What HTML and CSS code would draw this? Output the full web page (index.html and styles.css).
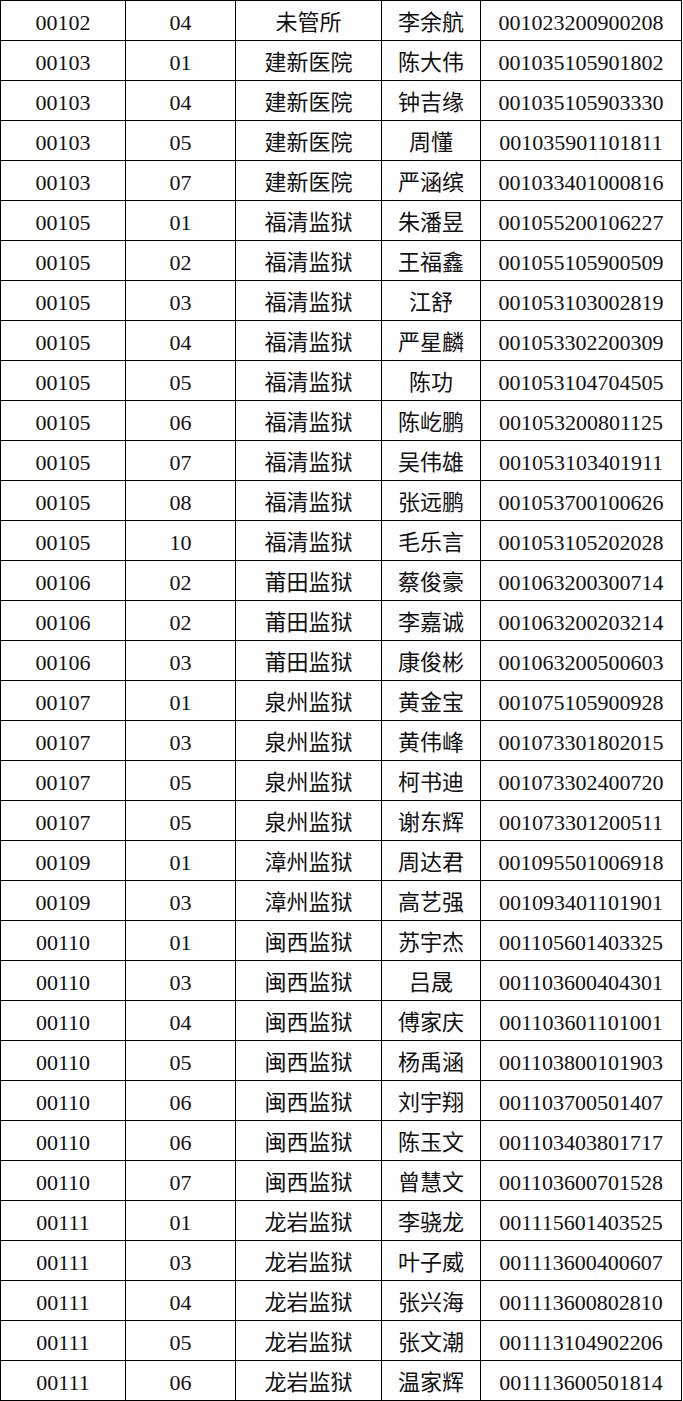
FILE: index.html
```html
<!DOCTYPE html>
<html lang="zh">
<head>
<meta charset="utf-8">
<link rel="stylesheet" href="styles.css">
</head>
<body>
<table class="roster">
<colgroup>
<col class="c1"><col class="c2"><col class="c3"><col class="c4"><col class="c5">
</colgroup>
<tbody>
<tr><td>00102</td><td>04</td><td>未管所</td><td>李余航</td><td>001023200900208</td></tr>
<tr><td>00103</td><td>01</td><td>建新医院</td><td>陈大伟</td><td>001035105901802</td></tr>
<tr><td>00103</td><td>04</td><td>建新医院</td><td>钟吉缘</td><td>001035105903330</td></tr>
<tr><td>00103</td><td>05</td><td>建新医院</td><td>周懂</td><td>001035901101811</td></tr>
<tr><td>00103</td><td>07</td><td>建新医院</td><td>严涵缤</td><td>001033401000816</td></tr>
<tr><td>00105</td><td>01</td><td>福清监狱</td><td>朱潘昱</td><td>001055200106227</td></tr>
<tr><td>00105</td><td>02</td><td>福清监狱</td><td>王福鑫</td><td>001055105900509</td></tr>
<tr><td>00105</td><td>03</td><td>福清监狱</td><td>江舒</td><td>001053103002819</td></tr>
<tr><td>00105</td><td>04</td><td>福清监狱</td><td>严星麟</td><td>001053302200309</td></tr>
<tr><td>00105</td><td>05</td><td>福清监狱</td><td>陈功</td><td>001053104704505</td></tr>
<tr><td>00105</td><td>06</td><td>福清监狱</td><td>陈屹鹏</td><td>001053200801125</td></tr>
<tr><td>00105</td><td>07</td><td>福清监狱</td><td>吴伟雄</td><td>001053103401911</td></tr>
<tr><td>00105</td><td>08</td><td>福清监狱</td><td>张远鹏</td><td>001053700100626</td></tr>
<tr><td>00105</td><td>10</td><td>福清监狱</td><td>毛乐言</td><td>001053105202028</td></tr>
<tr><td>00106</td><td>02</td><td>莆田监狱</td><td>蔡俊豪</td><td>001063200300714</td></tr>
<tr><td>00106</td><td>02</td><td>莆田监狱</td><td>李嘉诚</td><td>001063200203214</td></tr>
<tr><td>00106</td><td>03</td><td>莆田监狱</td><td>康俊彬</td><td>001063200500603</td></tr>
<tr><td>00107</td><td>01</td><td>泉州监狱</td><td>黄金宝</td><td>001075105900928</td></tr>
<tr><td>00107</td><td>03</td><td>泉州监狱</td><td>黄伟峰</td><td>001073301802015</td></tr>
<tr><td>00107</td><td>05</td><td>泉州监狱</td><td>柯书迪</td><td>001073302400720</td></tr>
<tr><td>00107</td><td>05</td><td>泉州监狱</td><td>谢东辉</td><td>001073301200511</td></tr>
<tr><td>00109</td><td>01</td><td>漳州监狱</td><td>周达君</td><td>001095501006918</td></tr>
<tr><td>00109</td><td>03</td><td>漳州监狱</td><td>高艺强</td><td>001093401101901</td></tr>
<tr><td>00110</td><td>01</td><td>闽西监狱</td><td>苏宇杰</td><td>001105601403325</td></tr>
<tr><td>00110</td><td>03</td><td>闽西监狱</td><td>吕晟</td><td>001103600404301</td></tr>
<tr><td>00110</td><td>04</td><td>闽西监狱</td><td>傅家庆</td><td>001103601101001</td></tr>
<tr><td>00110</td><td>05</td><td>闽西监狱</td><td>杨禹涵</td><td>001103800101903</td></tr>
<tr><td>00110</td><td>06</td><td>闽西监狱</td><td>刘宇翔</td><td>001103700501407</td></tr>
<tr><td>00110</td><td>06</td><td>闽西监狱</td><td>陈玉文</td><td>001103403801717</td></tr>
<tr><td>00110</td><td>07</td><td>闽西监狱</td><td>曾慧文</td><td>001103600701528</td></tr>
<tr><td>00111</td><td>01</td><td>龙岩监狱</td><td>李骁龙</td><td>001115601403525</td></tr>
<tr><td>00111</td><td>03</td><td>龙岩监狱</td><td>叶子威</td><td>001113600400607</td></tr>
<tr><td>00111</td><td>04</td><td>龙岩监狱</td><td>张兴海</td><td>001113600802810</td></tr>
<tr><td>00111</td><td>05</td><td>龙岩监狱</td><td>张文潮</td><td>001113104902206</td></tr>
<tr><td>00111</td><td>06</td><td>龙岩监狱</td><td>温家辉</td><td>001113600501814</td></tr>
</tbody>
</table>
</body>
</html>
```

FILE: styles.css
```css
html, body {
  margin: 0;
  padding: 0;
  background: #fff;
}

.roster {
  border-collapse: collapse;
  table-layout: fixed;
  width: 682px;
  font-family: "Liberation Serif", "Noto Sans CJK SC", serif;
  font-size: 22px;
  color: #111;
}

.c1 { width: 125px; }
.c2 { width: 110px; }
.c3 { width: 146px; }
.c4 { width: 99px; }
.c5 { width: 201px; }

.roster tr {
  height: 40px;
}

.roster td {
  border: 1px solid #000;
  height: 40px;
  padding: 4px 0 0 0;
  box-sizing: border-box;
  text-align: center;
  vertical-align: middle;
  line-height: 1;
  white-space: nowrap;
  overflow: hidden;
}
```
